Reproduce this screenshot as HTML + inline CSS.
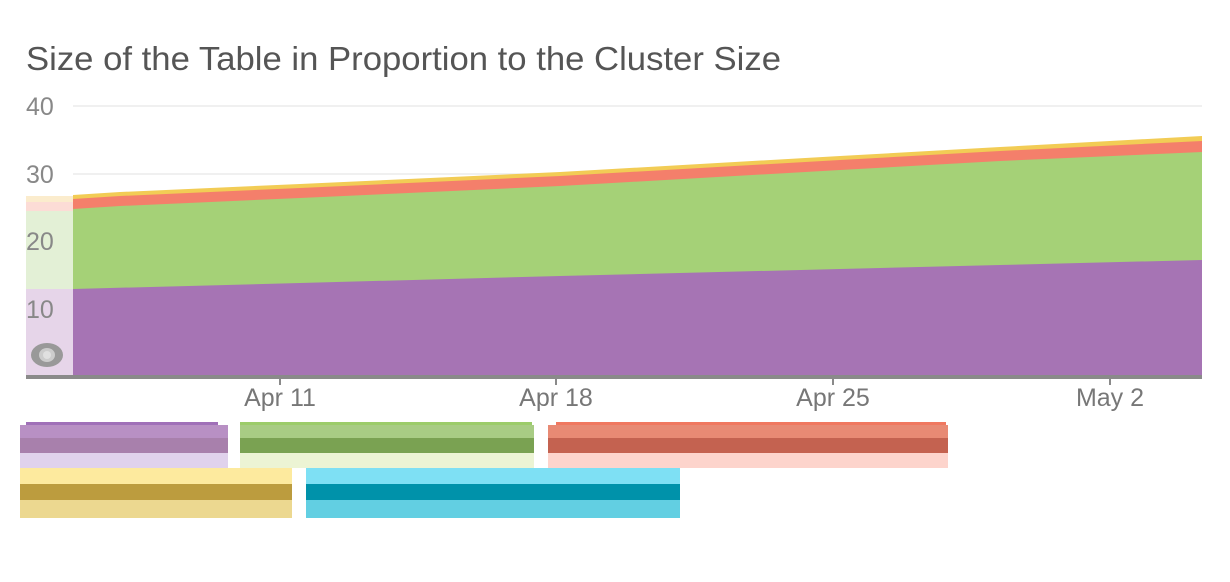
<!DOCTYPE html>
<html><head><meta charset="utf-8"><style>
html,body{margin:0;padding:0;background:#fff;width:1230px;height:582px;overflow:hidden;font-family:"Liberation Sans",sans-serif}
</style></head><body>
<svg width="1230" height="582" xmlns="http://www.w3.org/2000/svg" style="position:absolute;left:0;top:0">
<text x="26" y="70" font-family="Liberation Sans, sans-serif" font-size="30" fill="#555" textLength="755" lengthAdjust="spacingAndGlyphs" style="font-size:33px">Size of the Table in Proportion to the Cluster Size</text>
<g stroke="#ececec" stroke-width="1.5">
<line x1="73" y1="106" x2="1202" y2="106"/><line x1="73" y1="174" x2="1202" y2="174"/>
<line x1="73" y1="241" x2="1202" y2="241"/><line x1="73" y1="309" x2="1202" y2="309"/>
</g>
<polygon points="73,195 120,192 300,184 560,172 840,156 1000,147 1202,136 1202,376 73,376" fill="#f2cc55"/>
<polygon points="73,199 120,196 300,188 560,176 840,160 1000,151 1202,141 1202,376 73,376" fill="#f47f6b"/>
<polygon points="73,209 120,206 300,198 560,186 840,170 1000,161 1202,152 1202,376 73,376" fill="#a5d177"/>
<polygon points="73,289 300,283 560,276 840,269 1000,265 1202,260 1202,376 73,376" fill="#a674b4"/>
<rect x="26" y="196" width="47" height="6" fill="#fbeccd"/>
<rect x="26" y="202" width="47" height="9" fill="#fcdcd6"/>
<rect x="26" y="211" width="47" height="78" fill="#e3f0d6"/>
<rect x="26" y="289" width="47" height="87" fill="#e6d5e9"/>
<g font-family="Liberation Sans, sans-serif" font-size="25" fill="#888">
<text x="26" y="115">40</text><text x="26" y="183">30</text><text x="26" y="250">20</text><text x="26" y="318">10</text></g>
<ellipse cx="47" cy="355" rx="16" ry="12" fill="#999"/><ellipse cx="47" cy="355" rx="8" ry="7" fill="#ccc"/><circle cx="47" cy="355" r="4" fill="#e0e0e0"/>
<rect x="26" y="375" width="1176" height="4" fill="#8a8a8a"/>
<g stroke="#8a8a8a" stroke-width="2"><line x1="280" y1="379" x2="280" y2="385"/><line x1="556" y1="379" x2="556" y2="385"/><line x1="833" y1="379" x2="833" y2="385"/><line x1="1110" y1="379" x2="1110" y2="385"/></g>
<g font-family="Liberation Sans, sans-serif" font-size="25" fill="#777" text-anchor="middle">
<text x="280" y="406">Apr 11</text><text x="556" y="406">Apr 18</text><text x="833" y="406">Apr 25</text><text x="1110" y="406">May 2</text></g>
<rect x="26" y="422" width="192" height="3" fill="#a070b8"/>
<rect x="20" y="425" width="208" height="13" fill="#b890c4"/>
<rect x="20" y="438" width="208" height="15" fill="#a880ac"/>
<rect x="20" y="453" width="208" height="15" fill="#e0d2ec"/>
<rect x="240" y="422" width="292" height="3" fill="#9ccc6a"/>
<rect x="240" y="425" width="294" height="13" fill="#a8cc84"/>
<rect x="240" y="438" width="294" height="15" fill="#7aa252"/>
<rect x="240" y="453" width="294" height="15" fill="#ecf4d4"/>
<rect x="556" y="422" width="390" height="3" fill="#f07860"/>
<rect x="548" y="425" width="400" height="13" fill="#e88a74"/>
<rect x="548" y="438" width="400" height="15" fill="#c46250"/>
<rect x="548" y="453" width="400" height="15" fill="#fdd4cc"/>
<rect x="20" y="468" width="272" height="16" fill="#fdea9e"/>
<rect x="20" y="484" width="272" height="16" fill="#bc9c3e"/>
<rect x="20" y="500" width="272" height="18" fill="#ecd890"/>
<rect x="306" y="468" width="374" height="16" fill="#7ee0f4"/>
<rect x="306" y="484" width="374" height="16" fill="#0092aa"/>
<rect x="306" y="500" width="374" height="18" fill="#62cfe2"/>
</svg>
</body></html>
